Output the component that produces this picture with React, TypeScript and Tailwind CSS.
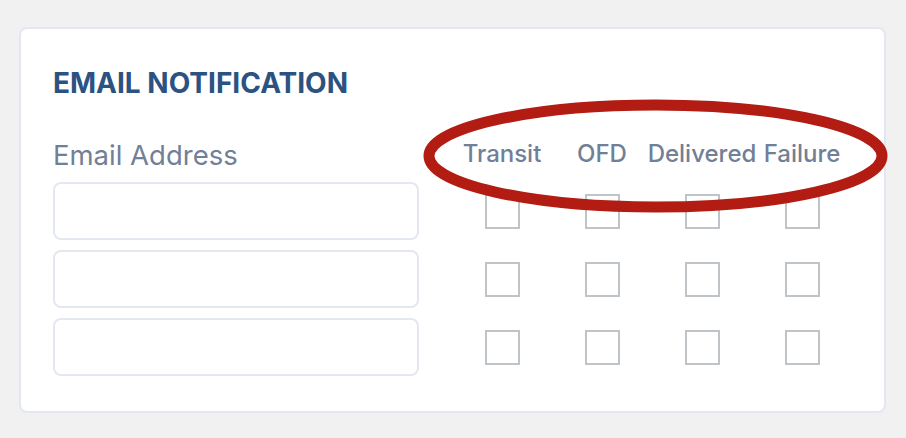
import React from "react";

const columns = ["Transit", "OFD", "Delivered", "Failure"];
const rows = [0, 1, 2];

export default function App() {
  return (
    <div
      className="relative min-h-screen bg-[#f1f1f1] pt-[27px] pl-[19px]"
      style={{ fontFamily: "Inter, 'Noto Sans', sans-serif" }}
    >
      <div className="w-[867px] h-[386px] rounded-lg border-2 border-[#e3e8f0] bg-white px-8 pt-[38px]">
        <h2 className="text-[28px] leading-[32px] font-bold text-[#2c5282]">
          EMAIL NOTIFICATION
        </h2>

        {/* header row */}
        <div className="mt-[38px] flex items-end h-[36px]">
          <div className="w-[366px] text-[27.5px] leading-[36px] text-[#718096]">
            Email Address
          </div>
          <div className="ml-[33px] flex pb-[2px]">
            {columns.map((c) => (
              <div
                key={c}
                className="w-[100px] flex justify-center text-[24px] leading-[34px] font-medium text-[#718096] whitespace-nowrap"
              >
                {c}
              </div>
            ))}
          </div>
        </div>

        {/* rows */}
        <div className="mt-[9px] flex flex-col gap-[10px]">
          {rows.map((r) => (
            <div key={r} className="flex items-center">
              <input
                type="text"
                className="w-[366px] h-[58px] rounded-lg border-2 border-[#e3e8f0] bg-white outline-none"
              />
              <div className="ml-[33px] flex">
                {columns.map((c) => (
                  <div key={c} className="w-[100px] flex justify-center">
                    <div className="w-[35px] h-[35px] border-2 border-[#bfc4c8] bg-white" />
                  </div>
                ))}
              </div>
            </div>
          ))}
        </div>
      </div>

      {/* red annotation ellipse */}
      <svg
        className="absolute left-0 top-0 pointer-events-none"
        width="906"
        height="438"
        viewBox="0 0 906 438"
      >
        <ellipse
          cx="655.5"
          cy="156"
          rx="226.5"
          ry="51"
          fill="none"
          stroke="#b21c12"
          strokeWidth="11"
        />
      </svg>
    </div>
  );
}
